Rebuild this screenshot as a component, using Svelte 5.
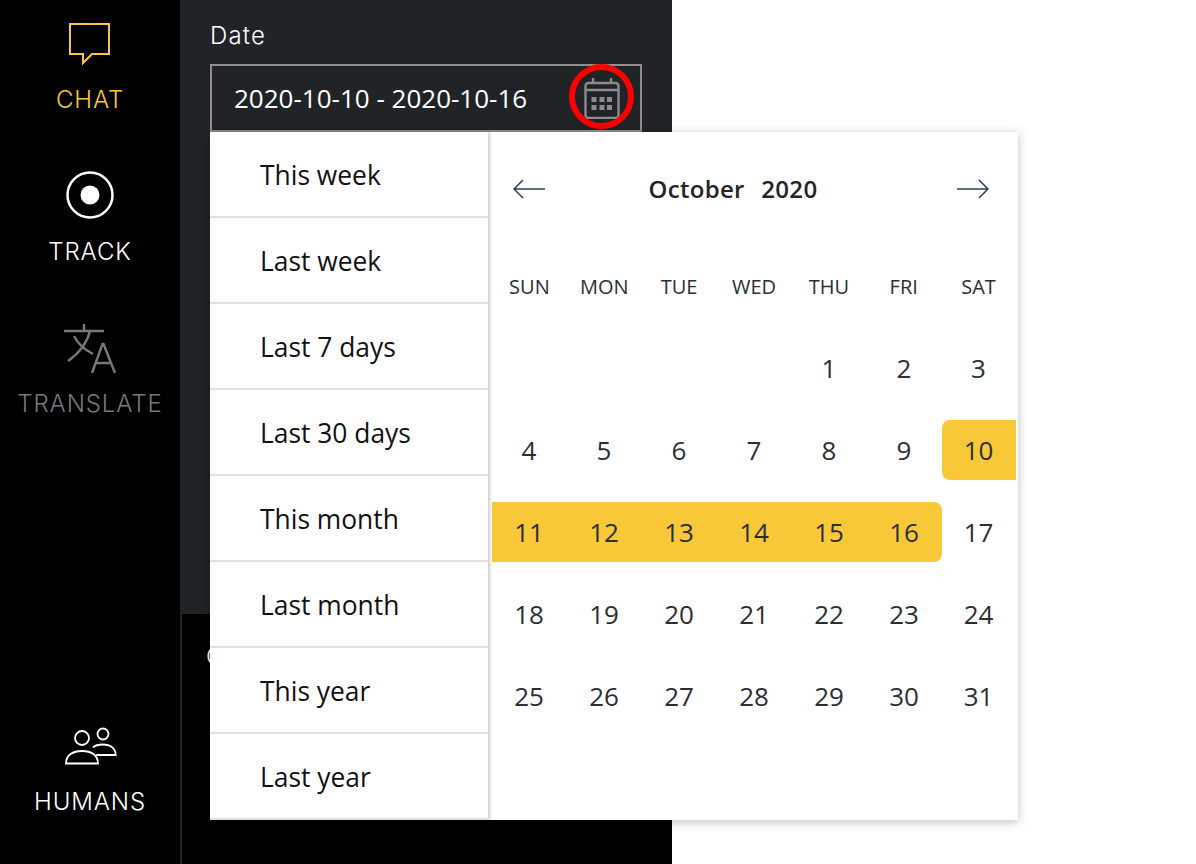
<script>
    const presets = ['This week', 'Last week', 'Last 7 days', 'Last 30 days', 'This month', 'Last month', 'This year', 'Last year'];
    const weekdays = ['SUN', 'MON', 'TUE', 'WED', 'THU', 'FRI', 'SAT'];

    // October 2020 starts on a Thursday
    const leading = 4;
    const days = Array.from({ length: 31 }, (_, i) => i + 1);
    const rangeStart = 10;
    const rangeEnd = 16;

    function dayClass(d) {
        if (d < rangeStart || d > rangeEnd) return 'day';
        let name = 'day selected';
        if (d === rangeStart) name += ' range-start';
        if (d === rangeEnd) name += ' range-end';
        return name;
    }
</script>

<div class="page">
    <nav class="sidebar">
        <div class="nav-top">
            <a class="nav-item chat" href="/">
                <svg width="42" height="44" viewBox="0 0 42 44" fill="none" stroke="currentColor" stroke-width="2">
                    <path d="M1 2H40V32H23L14 41V32H1Z" />
                </svg>
                <span>CHAT</span>
            </a>
            <a class="nav-item track" href="/">
                <svg width="50" height="50" viewBox="0 0 50 50" fill="none">
                    <circle cx="25" cy="25" r="22.5" stroke="currentColor" stroke-width="2.5" />
                    <circle cx="25" cy="25" r="9.5" fill="currentColor" />
                </svg>
                <span>TRACK</span>
            </a>
            <a class="nav-item translate" href="/">
                <svg width="52" height="50" viewBox="0 0 52 50" fill="none" stroke="currentColor" stroke-width="2.4">
                    <path d="M0 7H40M20 0V7M26 7C23 19 14 30 4 37M10 12C14 20 21 26 29 30M28 49L38.500 20H39.500L51 49M31 39H48" />
                </svg>
                <span>TRANSLATE</span>
            </a>
        </div>
        <a class="nav-item humans" href="/">
            <svg width="54" height="40" viewBox="0 0 54 40" fill="none" stroke="currentColor" stroke-width="1.8">
                <circle cx="19" cy="11" r="7" />
                <circle cx="40" cy="7" r="5.500" />
                <path d="M3 36.500C3 28 10 24 19 24S35 28 35 36.500Z" />
                <path d="M30 20.500C32 18.500 35.500 17.500 40 17.500C47 17.500 52.700 21 52.700 28H33" />
            </svg>
            <span>HUMANS</span>
        </a>
    </nav>

    <main class="content">
        <section class="panel">
            <label class="field-label" for="date-range">Date</label>
            <div class="date-field">
                <input id="date-range" value="2020-10-10 - 2020-10-16" readonly />
                <svg class="calendar-icon" width="36" height="42" viewBox="0 0 36 42" fill="none" stroke="#8c8c8c" stroke-width="2.400">
                    <rect x="1.500" y="6" width="33" height="35" rx="3" />
                    <path d="M1.500 13H34.500M9 1V6M27 1V6" />
                    <g fill="#8c8c8c" stroke="none">
                        <rect x="7.500" y="20" width="5" height="5" />
                        <rect x="15.500" y="20" width="5" height="5" />
                        <rect x="23" y="20" width="5" height="5" />
                        <rect x="7.500" y="28" width="5" height="5" />
                        <rect x="15.500" y="28" width="5" height="5" />
                        <rect x="23" y="28" width="5" height="5" />
                    </g>
                </svg>
                <span class="ring"></span>

                <div class="dropdown">
                    <ul class="presets">
                        {#each presets as preset}
                            <li>{preset}</li>
                        {/each}
                    </ul>
                    <div class="calendar">
                        <div class="month-bar">
                            <svg width="32" height="20" viewBox="0 0 32 20" fill="none" stroke="#2c3e50" stroke-width="1.500">
                                <path d="M32 10H1M10 1L1 10L10 19" />
                            </svg>
                            <strong>October <span class="year">2020</span></strong>
                            <svg width="32" height="20" viewBox="0 0 32 20" fill="none" stroke="#2c3e50" stroke-width="1.500">
                                <path d="M0 10H31M22 1L31 10L22 19" />
                            </svg>
                        </div>
                        <div class="weekdays">
                            {#each weekdays as w}
                                <span>{w}</span>
                            {/each}
                        </div>
                        <div class="days">
                            {#each { length: leading } as _}
                                <span></span>
                            {/each}
                            {#each days as d}
                                <span class={dayClass(d)}>{d}</span>
                            {/each}
                        </div>
                    </div>
                </div>
            </div>
        </section>
        <section class="below">
            <span class="below-label">Channel</span>
        </section>
    </main>
</div>

<style>
    :global(body) {
        background: #fff;
    }

    .page {
        display: flex;
        width: 672px;
        height: 864px;
        background: #000;
        font-family: "Open Sans", sans-serif;
    }

    .sidebar {
        flex: 0 0 180px;
        display: flex;
        flex-direction: column;
        justify-content: space-between;
        padding: 22px 0 48px;
        box-sizing: content-box;
        height: 794px;
        background: #000;
        border-right: 2px solid #1f2326;
    }

    .nav-top {
        display: flex;
        flex-direction: column;
    }

    .nav-item {
        display: flex;
        flex-direction: column;
        align-items: center;
        font-family: Inter, sans-serif;
        font-size: 24px;
        font-weight: 300;
        letter-spacing: 0.9px;
        line-height: 28px;
        text-decoration: none;
        color: #fff;
    }

    .nav-item span {
        margin-top: 20px;
    }

    .chat {
        color: #f9c838;
        height: 148px;
    }

    .track {
        height: 154px;
    }

    .track span {
        margin-top: 18px;
    }

    .translate {
        color: #787878;
    }

    .translate span {
        margin-top: 16px;
    }

    .humans span {
        margin-top: 21px;
    }

    .content {
        flex: 1;
        display: flex;
        flex-direction: column;
        position: relative;
    }

    .panel {
        height: 614px;
        padding: 21px 30px 0 28px;
        box-sizing: border-box;
        background: #202427;
    }

    .field-label {
        display: block;
        height: 43px;
        font-family: Inter, sans-serif;
        font-size: 24px;
        font-weight: 300;
        letter-spacing: 1.2px;
        line-height: 30px;
        color: #fff;
    }

    .date-field {
        position: relative;
        display: flex;
        align-items: center;
        height: 68px;
        box-sizing: border-box;
        border: 2px solid #8f8f8f;
    }

    input {
        flex: 1;
        min-width: 0;
        padding: 0 0 0 22px;
        border: 0;
        outline: 0;
        background: none;
        font-family: "Open Sans", sans-serif;
        font-size: 26px;
        color: #fff;
    }

    .calendar-icon {
        margin-right: 20px;
    }

    .ring {
        position: absolute;
        top: -2px;
        left: 357px;
        width: 53px;
        height: 53px;
        border: 6px solid #f00;
        border-radius: 50%;
    }

    .dropdown {
        position: absolute;
        top: 66px;
        left: -2px;
        display: flex;
        width: 808px;
        height: 688px;
        background: #fff;
        box-shadow: 0 2px 10px rgba(0, 0, 0, 0.25);
    }

    .presets {
        flex: 0 0 278px;
        margin: 0;
        padding: 0;
        list-style: none;
        box-shadow: 2px 0 3px rgba(0, 0, 0, 0.2);
    }

    .presets li {
        display: flex;
        align-items: center;
        height: 86px;
        padding: 2px 0 0 50px;
        box-sizing: border-box;
        border-bottom: 2px solid #e0e0e0;
        font-size: 26.4px;
        color: #111;
    }

    .calendar {
        flex: 1;
        margin-left: 2px;
        padding: 0 2px;
        color: #2b2f33;
    }

    .month-bar {
        display: flex;
        align-items: center;
        justify-content: space-between;
        height: 114px;
        padding: 0 27px 0 21px;
    }

    .month-bar strong {
        margin: 0 36px 2px 0;
        font-size: 24px;
        font-weight: 600;
        letter-spacing: 0.3px;
        color: #212529;
    }

    .year {
        margin-left: 10px;
    }

    .weekdays {
        display: grid;
        grid-template-columns: repeat(7, 1fr);
        height: 78px;
        padding-top: 26px;
        box-sizing: border-box;
        font-size: 20px;
        line-height: 30px;
        text-align: center;
    }

    .days {
        display: grid;
        grid-template-columns: repeat(6, 75px) 74px;
        grid-auto-rows: 60px;
        row-gap: 22px;
        margin-top: 14px;
        font-size: 26px;
    }

    .day {
        display: flex;
        align-items: center;
        justify-content: center;
        padding-right: 1px;
    }

    .selected {
        background: #f9c838;
    }

    .range-start {
        border-radius: 8px 0 0 8px;
    }

    .range-end {
        border-radius: 0 8px 8px 0;
    }

    .below {
        flex: 1;
        padding: 28px 0 0 24px;
        color: #fff;
        font-family: Inter, sans-serif;
        font-size: 24px;
        font-weight: 300;
    }
</style>
